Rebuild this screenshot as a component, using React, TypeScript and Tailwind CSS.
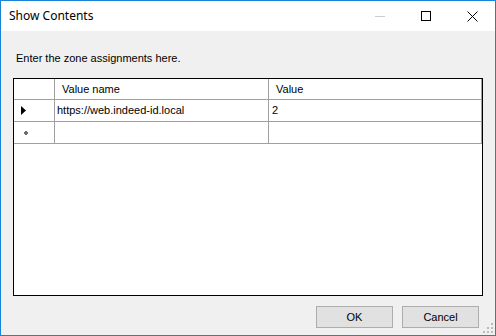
import React from "react";

export default function App() {
  const sans = { fontFamily: '"Liberation Sans", Arial, sans-serif' };
  return (
    <div className="w-[496px] h-[336px] border border-[#1883d7] flex flex-col bg-[#f0f0f0]" style={sans}>
      {/* Title bar */}
      <div className="h-[30px] bg-white flex items-center shrink-0">
        <span className="ml-[8px] text-[12px] text-black" style={{ fontFamily: '"Noto Sans", "Open Sans", sans-serif' }}>
          Show Contents
        </span>
        <div className="ml-auto flex items-center h-full">
          <div className="w-[46px] h-full flex items-center justify-center">
            <svg width="10" height="10" viewBox="0 0 10 10">
              <rect x="0" y="5" width="10" height="1" fill="#cccccc" />
            </svg>
          </div>
          <div className="w-[46px] h-full flex items-center justify-center">
            <svg width="10" height="10" viewBox="0 0 10 10">
              <rect x="0.5" y="0.5" width="9" height="9" fill="none" stroke="#000" strokeWidth="1" />
            </svg>
          </div>
          <div className="w-[46px] h-full flex items-center justify-center">
            <svg width="11" height="11" viewBox="0 0 11 11">
              <path d="M0.5 0.5 L10.5 10.5 M10.5 0.5 L0.5 10.5" stroke="#000" strokeWidth="1" />
            </svg>
          </div>
        </div>
      </div>

      {/* Body */}
      <div className="flex-1 flex flex-col px-[12px] relative">
        <div className="mt-[21px] ml-[3px] text-[11px] leading-[13px] text-black">
          Enter the zone assignments here.
        </div>

        <div className="mt-[13px] w-[470px] h-[218px] border border-black bg-white flex flex-col text-[11px] text-black">
          {/* Header row */}
          <div className="flex h-[21px] border-b border-[#a0a0a0]">
            <div className="w-[41px] border-r border-[#a0a0a0]" />
            <div className="w-[214px] border-r border-[#a0a0a0] flex items-center pl-[7px] pt-[1px]">Value name</div>
            <div className="w-[213px] border-r border-[#a0a0a0] flex items-center pl-[7px] pt-[1px]">Value</div>
          </div>
          {/* Row 1 */}
          <div className="flex h-[22px] border-b border-[#a0a0a0]">
            <div className="w-[41px] border-r border-[#a0a0a0] flex items-center pl-[7px]">
              <svg width="6" height="9" viewBox="0 0 6 9">
                <path d="M0 0 L5 4.5 L0 9 Z" fill="#000" />
              </svg>
            </div>
            <div className="w-[214px] border-r border-[#a0a0a0] flex items-center pl-[2px]">https://web.indeed-id.local</div>
            <div className="w-[213px] border-r border-[#a0a0a0] flex items-center pl-[3px]">2</div>
          </div>
          {/* Row 2 (new row) */}
          <div className="flex h-[22px] border-b border-[#a0a0a0]">
            <div className="w-[41px] border-r border-[#a0a0a0] flex items-center pl-[10px]">
              <svg width="4" height="4" viewBox="0 0 4 4">
                <rect x="0" y="1" width="4" height="2" fill="#6d6d6d" />
                <rect x="1" y="0" width="2" height="4" fill="#6d6d6d" />
              </svg>
            </div>
            <div className="w-[214px] border-r border-[#a0a0a0]" />
            <div className="w-[213px] border-r border-[#a0a0a0]" />
          </div>
        </div>

        <div className="mt-[10px] flex justify-end gap-[9px] pr-[4px]">
          <button className="w-[77px] h-[22px] bg-[#e1e1e1] border border-[#adadad] text-[11px] text-black flex items-center justify-center">
            OK
          </button>
          <button className="w-[77px] h-[22px] bg-[#e1e1e1] border border-[#adadad] text-[11px] text-black flex items-center justify-center">
            Cancel
          </button>
        </div>

        {/* Size grip */}
        <svg className="absolute right-[1px] bottom-[1px]" width="11" height="11" viewBox="0 0 11 11">
          <rect x="8" y="0" width="2" height="2" fill="#bcbcbc" />
          <rect x="4" y="4" width="2" height="2" fill="#bcbcbc" />
          <rect x="8" y="4" width="2" height="2" fill="#bcbcbc" />
          <rect x="0" y="8" width="2" height="2" fill="#bcbcbc" />
          <rect x="4" y="8" width="2" height="2" fill="#bcbcbc" />
          <rect x="8" y="8" width="2" height="2" fill="#bcbcbc" />
        </svg>
      </div>
    </div>
  );
}
